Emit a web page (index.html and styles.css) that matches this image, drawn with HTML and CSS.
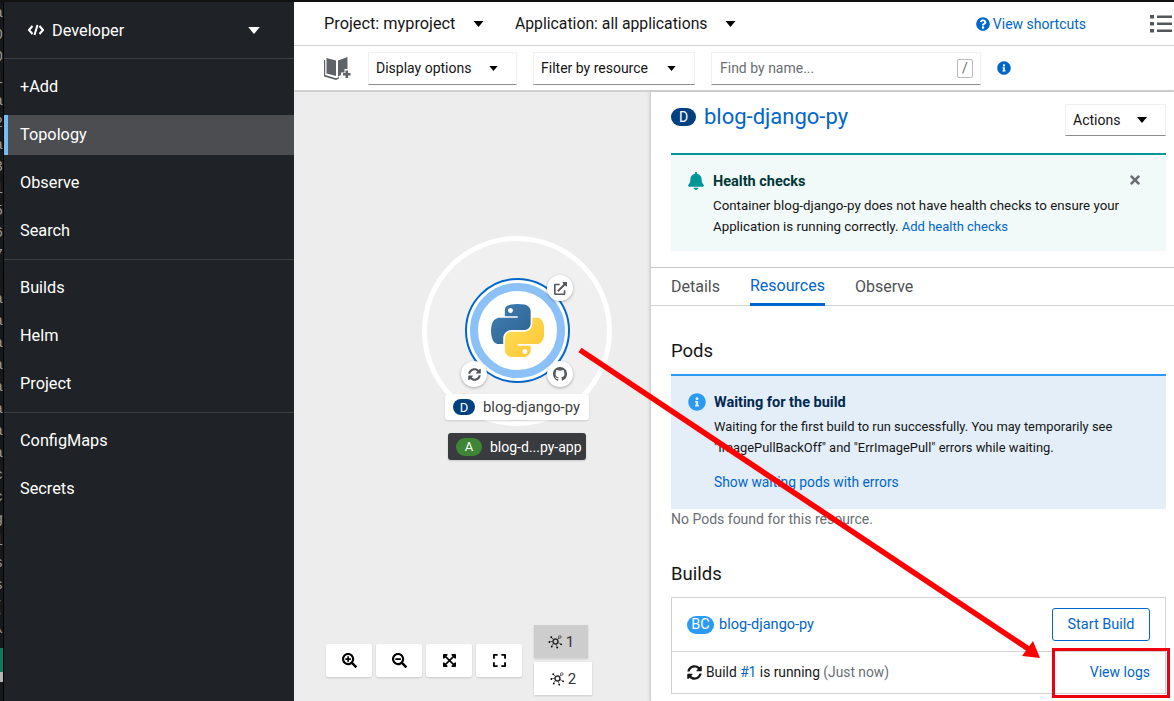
FILE: index.html
```html
<!DOCTYPE html>
<html lang="en">
<head>
    <meta charset="UTF-8">
    <meta name="viewport" content="width=device-width, initial-scale=1.0">
    <title>Topology</title>
    <link rel="stylesheet" href="styles.css">
</head>
<body>
    <svg width="0" height="0" class="defs">
        <defs>
            <symbol id="caret" viewBox="0 0 10 6"><path d="M0 0h10L5 6z"/></symbol>
            <symbol id="sync" viewBox="0 0 512 512"><path d="M370.72 133.28C339.458 104.008 298.888 87.962 255.848 88c-77.458.068-144.328 53.178-162.791 126.85-1.344 5.363-6.122 9.15-11.651 9.15H24.103c-7.498 0-13.194-6.807-11.807-14.176C33.933 94.924 134.813 8 256 8c66.448 0 126.791 26.136 171.315 68.685L463.03 40.97C478.149 25.851 504 36.559 504 57.941V192c0 13.255-10.745 24-24 24H345.941c-21.382 0-32.09-25.851-16.971-40.971l41.75-41.749zM32 296h134.059c21.382 0 32.09 25.851 16.971 40.971l-41.75 41.75c31.262 29.273 71.835 45.319 114.876 45.28 77.418-.07 144.315-53.144 162.787-126.849 1.344-5.363 6.122-9.15 11.651-9.15h57.304c7.498 0 13.194 6.807 11.807 14.176C478.067 417.076 377.187 504 256 504c-66.448 0-126.791-26.136-171.315-68.685L48.97 471.03C33.851 486.149 8 475.441 8 454.059V320c0-13.255 10.745-24 24-24z"/></symbol>
            <symbol id="info" viewBox="0 0 512 512"><path d="M256 8C119.043 8 8 119.083 8 256c0 136.997 111.043 248 248 248s248-111.003 248-248C504 119.083 392.957 8 256 8zm0 110c23.196 0 42 18.804 42 42s-18.804 42-42 42-42-18.804-42-42 18.804-42 42-42zm56 254c0 6.627-5.373 12-12 12h-88c-6.627 0-12-5.373-12-12v-24c0-6.627 5.373-12 12-12h12v-64h-12c-6.627 0-12-5.373-12-12v-24c0-6.627 5.373-12 12-12h64c6.627 0 12 5.373 12 12v100h12c6.627 0 12 5.373 12 12v24z"/></symbol>
            <symbol id="cluster" viewBox="0 0 16 16">
                <circle cx="8" cy="8" r="2.6" fill="none" stroke="currentColor" stroke-width="1.6"/>
                <path d="M6.2 6.2L3.5 3.5M9.8 6.2l2-2M6 9.7l-2 3M8.6 10.5l1 3M5.4 8H2.5M10.5 9l3 1.5" stroke="currentColor" stroke-width=".8" fill="none"/>
                <circle cx="3.5" cy="3.5" r="1"/><circle cx="12.6" cy="3.2" r="1.4" fill="none" stroke="currentColor" stroke-width=".8"/><circle cx="1.5" cy="8.5" r="1"/><circle cx="4" cy="13.4" r="1"/><circle cx="9.8" cy="14.5" r="1"/><circle cx="14" cy="11" r="1"/>
            </symbol>
        </defs>
    </svg>

    <div class="app">
        <div class="gutter">
            <span>a</span><span>0</span><span>0</span><span>l</span><span>a</span><span>2</span><span>a</span><span>3</span><span>1</span><span>5</span><span>6</span><span>7</span><span>:</span><span>a</span><span>a</span><span>a</span><span>a</span><span>a</span><span>a</span><span>a</span><span>a</span><span>c</span><span>c</span><span>g</span><span>1</span><span>s</span><span>s</span><span>(</span><span>\</span><span>|</span>
            <div class="gutter-green"></div>
            <div class="gutter-grey"></div>
        </div>

        <aside class="sidebar">
            <div class="perspective">
                <svg class="code-icon" viewBox="0 0 16 12" width="16" height="12"><path d="M4.5 2L1 6l3.5 4M11.5 2L15 6l-3.5 4M9.5 1L6.5 11" fill="none" stroke="#fff" stroke-width="2"/></svg>
                <span class="perspective-name">Developer</span>
                <svg class="caret" width="12" height="7" fill="#fff"><use href="#caret"/></svg>
            </div>
            <nav class="nav-group">
                <a href="#">+Add</a>
                <a href="#" class="active">Topology</a>
                <a href="#">Observe</a>
                <a href="#">Search</a>
            </nav>
            <nav class="nav-group">
                <a href="#">Builds</a>
                <a href="#">Helm</a>
                <a href="#">Project</a>
            </nav>
            <nav class="nav-group last">
                <a href="#">ConfigMaps</a>
                <a href="#">Secrets</a>
            </nav>
        </aside>

        <main class="main">
            <header class="topbar">
                <div class="scope project">Project: myproject <svg width="11" height="6"><use href="#caret"/></svg></div>
                <div class="scope application">Application: all applications <svg width="11" height="6"><use href="#caret"/></svg></div>
                <a href="#" class="shortcuts">
                    <svg width="14" height="14" viewBox="0 0 512 512" fill="#06c"><path d="M504 256c0 136.997-111.043 248-248 248S8 392.997 8 256C8 119.083 119.043 8 256 8s248 111.083 248 248zM262.655 90c-54.497 0-89.255 22.957-116.549 63.758-3.536 5.286-2.353 12.415 2.715 16.258l34.699 26.31c5.205 3.947 12.621 3.008 16.665-2.122 17.864-22.658 30.113-35.797 57.303-35.797 20.429 0 45.698 13.148 45.698 32.958 0 14.976-12.363 22.667-32.534 33.976C247.128 238.528 216 254.941 216 296v4c0 6.627 5.373 12 12 12h56c6.627 0 12-5.373 12-12v-1.333c0-28.462 83.186-29.647 83.186-106.667 0-58.002-60.165-102-116.531-102zM256 338c-25.365 0-46 20.635-46 46 0 25.364 20.635 46 46 46s46-20.636 46-46c0-25.365-20.635-46-46-46z"/></svg>
                    View shortcuts
                </a>
                <svg class="list-icon" width="22" height="18" viewBox="0 0 22 18" fill="#53575b">
                    <rect x="0" y="0" width="4" height="3.5"/><rect x="7" y="0.5" width="15" height="2.5"/>
                    <rect x="0" y="7" width="4" height="3.5"/><rect x="7" y="7.5" width="15" height="2.5"/>
                    <rect x="0" y="14" width="4" height="3.5"/><rect x="7" y="14.5" width="15" height="2.5"/>
                </svg>
            </header>

            <div class="toolbar">
                <svg class="book-icon" width="28" height="25" viewBox="0 0 28 25" fill="#5f6368">
                    <path d="M2.5 2l9.5 2.5V20L2.5 17.5zM14 4.5L23.5 1v12h-3v3.5H17V19l-3 1.5z"/>
                    <path d="M0 4h1.2v15l10.8 3.2 3-1.200v1.500L12 24 0 20.500z"/>
                    <path d="M21.5 14.5H24V17h2.500v2.500H24V22h-2.500v-2.500H19V17h2.500z"/>
                </svg>
                <div class="select display">Display options <svg width="9" height="5"><use href="#caret"/></svg></div>
                <div class="select filter">Filter by resource <svg width="9" height="5"><use href="#caret"/></svg></div>
                <div class="search-box">
                    <span>Find by name...</span>
                    <kbd>/</kbd>
                </div>
                <svg class="toolbar-info" width="14" height="14" fill="#06c"><use href="#info"/></svg>
            </div>

            <div class="content">
                <section class="canvas">
                    <div class="group-ring"></div>
                    <div class="node">
                        <svg class="python" width="53" height="53" viewBox="0 0 110 110">
                            <defs>
                                <linearGradient id="pyblue" x1="0" y1="0" x2="1" y2="1"><stop offset="0" stop-color="#3f7fb3"/><stop offset="1" stop-color="#2f6290"/></linearGradient>
                                <linearGradient id="pyyellow" x1="0" y1="0" x2="1" y2="1"><stop offset="0" stop-color="#ffe05a"/><stop offset="1" stop-color="#ffc331"/></linearGradient>
                            </defs>
                            <path fill="url(#pyblue)" d="M54.919 0.001c-4.584.022-8.961.413-12.812 1.095C30.761 3.1 28.701 7.3 28.701 15.032v10.21h26.813v3.404H18.638c-7.793 0-14.616 4.684-16.75 13.594-2.462 10.213-2.571 16.586 0 27.25 1.906 7.938 6.458 13.594 14.25 13.594h9.22V70.85c0-8.85 7.657-16.656 16.75-16.656h26.78c7.454 0 13.406-6.138 13.406-13.625V15.032c0-7.266-6.13-12.725-13.406-13.937C64.282.328 59.502-.02 54.918.001zM40.419 8.22c2.77 0 5.031 2.299 5.031 5.125 0 2.816-2.262 5.094-5.03 5.094-2.78 0-5.032-2.278-5.032-5.094 0-2.826 2.252-5.125 5.031-5.125z"/>
                            <path fill="url(#pyyellow)" d="M85.638 28.657v11.906c0 9.231-7.826 17-16.75 17h-26.78c-7.336 0-13.407 6.279-13.407 13.625v25.531c0 7.266 6.319 11.54 13.406 13.625 8.488 2.496 16.628 2.947 26.78 0 6.75-1.954 13.407-5.888 13.407-13.625V86.5H55.513v-3.405H95.7c7.793 0 10.696-5.436 13.406-13.594 2.8-8.399 2.68-16.476 0-27.25-1.925-7.758-5.604-13.594-13.406-13.594zM70.575 93.313c2.78 0 5.031 2.278 5.031 5.094 0 2.826-2.252 5.125-5.031 5.125-2.77 0-5.031-2.299-5.031-5.125 0-2.816 2.262-5.094 5.03-5.094z"/>
                        </svg>
                    </div>
                    <div class="decorator deco-link">
                        <svg width="13" height="13" viewBox="0 0 512 512" fill="#53575b"><path d="M432,320H400a16,16,0,0,0-16,16V448H64V128H208a16,16,0,0,0,16-16V80a16,16,0,0,0-16-16H48A48,48,0,0,0,0,112V464a48,48,0,0,0,48,48H400a48,48,0,0,0,48-48V336A16,16,0,0,0,432,320ZM488,0h-128c-21.37,0-32.05,25.91-17,41l35.73,35.73L135,320.37a24,24,0,0,0,0,34L157.67,377a24,24,0,0,0,34,0L435.28,133.32,471,169c15,15,41,4.5,41-17V24A24,24,0,0,0,488,0Z"/></svg>
                    </div>
                    <div class="decorator deco-sync">
                        <svg width="13" height="13" fill="#53575b"><use href="#sync"/></svg>
                    </div>
                    <div class="decorator deco-git">
                        <svg width="14" height="14" viewBox="0 0 16 16" fill="#53575b"><path d="M8 0C3.58 0 0 3.58 0 8c0 3.54 2.29 6.53 5.47 7.59.4.07.55-.17.55-.38 0-.19-.01-.82-.01-1.49-2.01.37-2.53-.49-2.69-.94-.09-.23-.48-.94-.82-1.13-.28-.15-.68-.52-.01-.53.63-.01 1.08.58 1.23.82.72 1.21 1.87.87 2.33.66.07-.52.28-.87.51-1.07-1.78-.2-3.64-.89-3.64-3.95 0-.87.31-1.59.82-2.15-.08-.2-.36-1.02.08-2.12 0 0 .67-.21 2.2.82.64-.18 1.32-.27 2-.27.68 0 1.36.09 2 .27 1.53-1.04 2.2-.82 2.2-.82.44 1.1.16 1.92.08 2.12.51.56.82 1.27.82 2.15 0 3.07-1.87 3.75-3.65 3.95.29.25.54.73.54 1.48 0 1.07-.01 1.93-.01 2.2 0 .21.15.46.55.38A8.013 8.013 0 0016 8c0-4.42-3.58-8-8-8z"/></svg>
                    </div>
                    <div class="chip chip-light"><span class="badge badge-d">D</span>blog-django-py</div>
                    <div class="chip chip-dark"><span class="badge badge-a">A</span>blog-d...py-app</div>

                    <div class="controls">
                        <button class="ctl">
                            <svg width="15" height="15" viewBox="0 0 512 512"><path d="M304 192v32c0 6.6-5.4 12-12 12h-56v56c0 6.6-5.4 12-12 12h-32c-6.6 0-12-5.4-12-12v-56h-56c-6.6 0-12-5.4-12-12v-32c0-6.6 5.4-12 12-12h56v-56c0-6.6 5.4-12 12-12h32c6.6 0 12 5.4 12 12v56h56c6.6 0 12 5.4 12 12zm201 284.7L476.7 505c-9.4 9.4-24.6 9.4-33.9 0L343 405.3c-4.5-4.5-7-10.6-7-17V372c-35.3 27.6-79.7 44-128 44C93.1 416 0 322.9 0 208S93.1 0 208 0s208 93.1 208 208c0 48.3-16.4 92.7-44 128h16.3c6.4 0 12.5 2.5 17 7l99.7 99.7c9.3 9.4 9.3 24.6 0 34zM344 208c0-75.2-60.8-136-136-136S72 132.8 72 208s60.8 136 136 136 136-60.8 136-136z"/></svg>
                        </button>
                        <button class="ctl">
                            <svg width="15" height="15" viewBox="0 0 512 512"><path d="M304 192v32c0 6.6-5.4 12-12 12H124c-6.6 0-12-5.4-12-12v-32c0-6.6 5.4-12 12-12h168c6.6 0 12 5.4 12 12zm201 284.7L476.7 505c-9.4 9.4-24.6 9.4-33.9 0L343 405.3c-4.5-4.5-7-10.6-7-17V372c-35.3 27.6-79.7 44-128 44C93.1 416 0 322.9 0 208S93.1 0 208 0s208 93.1 208 208c0 48.3-16.4 92.7-44 128h16.3c6.4 0 12.5 2.5 17 7l99.7 99.7c9.3 9.4 9.3 24.6 0 34zM344 208c0-75.2-60.8-136-136-136S72 132.8 72 208s60.8 136 136 136 136-60.8 136-136z"/></svg>
                        </button>
                        <button class="ctl">
                            <svg width="13" height="15" viewBox="0 0 448 512"><path d="M448 344v112a23.94 23.94 0 0 1-24 24H312c-21.39 0-32.09-25.9-17-41l36.2-36.2L224 295.6 116.77 402.9 153 439c15.09 15.1 4.39 41-17 41H24a23.94 23.94 0 0 1-24-24V344c0-21.4 25.89-32.1 41-17l36.19 36.2L184.46 256 77.18 148.7 41 185c-15.1 15.1-41 4.4-41-17V56a23.94 23.94 0 0 1 24-24h112c21.39 0 32.09 25.9 17 41l-36.2 36.2L224 216.4l107.23-107.3L295 73c-15.09-15.1-4.39-41 17-41h112a23.94 23.94 0 0 1 24 24v112c0 21.4-25.89 32.1-41 17l-36.19-36.2L263.54 256l107.28 107.3L407 327.1c15.1-15.2 41-4.5 41 16.9z"/></svg>
                        </button>
                        <button class="ctl">
                            <svg width="13" height="15" viewBox="0 0 448 512"><path d="M0 180V56c0-13.3 10.7-24 24-24h124c6.6 0 12 5.4 12 12v40c0 6.6-5.4 12-12 12H64v84c0 6.6-5.4 12-12 12H12c-6.6 0-12-5.4-12-12zM288 44v40c0 6.6 5.4 12 12 12h84v84c0 6.6 5.4 12 12 12h40c6.6 0 12-5.4 12-12V56c0-13.3-10.7-24-24-24H300c-6.6 0-12 5.4-12 12zm148 276h-40c-6.6 0-12 5.4-12 12v84h-84c-6.6 0-12 5.4-12 12v40c0 6.6 5.4 12 12 12h124c13.3 0 24-10.7 24-24V332c0-6.6-5.4-12-12-12zM160 468v-40c0-6.6-5.4-12-12-12H64v-84c0-6.6-5.4-12-12-12H12c-6.6 0-12 5.4-12 12v124c0 13.3 10.7 24 24 24h124c6.6 0 12-5.4 12-12z"/></svg>
                        </button>
                        <div class="layouts">
                            <button class="layout on"><svg width="15" height="15"><use href="#cluster"/></svg>1</button>
                            <button class="layout"><svg width="15" height="15"><use href="#cluster"/></svg>2</button>
                        </div>
                    </div>
                </section>

                <section class="panel">
                    <div class="panel-head">
                        <h1><span class="badge badge-d big">D</span>blog-django-py</h1>
                        <div class="select actions">Actions <svg width="10" height="6"><use href="#caret"/></svg></div>
                    </div>

                    <div class="alert alert-teal">
                        <svg class="alert-icon" width="16" height="18" viewBox="0 0 448 512" fill="#009596"><path d="M224 512c35.32 0 63.97-28.65 63.97-64H160.03c0 35.35 28.65 64 63.97 64zm215.39-149.71c-19.32-20.76-55.47-51.99-55.47-154.29 0-77.7-54.48-139.9-127.94-155.16V32c0-17.67-14.32-32-31.98-32s-31.98 14.33-31.98 32v20.84C118.56 68.1 64.08 130.3 64.08 208c0 102.3-36.15 133.53-55.47 154.29-6 6.45-8.66 14.16-8.61 21.71.11 16.4 12.98 32 32.1 32h383.8c19.12 0 32-15.6 32.1-32 .05-7.55-2.61-15.27-8.61-21.71z"/></svg>
                        <div class="alert-body">
                            <h4 class="title-teal">Health checks</h4>
                            <p>Container blog-django-py does not have health checks to ensure your Application is running correctly. <a href="#">Add health checks</a></p>
                        </div>
                        <svg class="alert-close" width="10" height="14" viewBox="0 0 352 512" fill="#6a6e73"><path d="M242.72 256l100.07-100.07c12.28-12.28 12.28-32.19 0-44.48l-22.24-22.24c-12.28-12.28-32.19-12.28-44.48 0L176 189.28 75.93 89.21c-12.28-12.28-32.19-12.28-44.48 0L9.21 111.45c-12.28 12.28-12.28 32.19 0 44.48L109.28 256 9.21 356.07c-12.28 12.28-12.28 32.19 0 44.48l22.24 22.24c12.28 12.28 32.2 12.28 44.48 0L176 322.72l100.07 100.07c12.28 12.28 32.2 12.28 44.48 0l22.24-22.24c12.28-12.28 12.28-32.19 0-44.48L242.72 256z"/></svg>
                    </div>

                    <div class="tabs">
                        <a href="#">Details</a>
                        <a href="#" class="current">Resources</a>
                        <a href="#">Observe</a>
                    </div>

                    <h2 class="section-title pods-title">Pods</h2>
                    <div class="alert alert-blue">
                        <svg class="alert-icon" width="18" height="18" fill="#2b9af3"><use href="#info"/></svg>
                        <div class="alert-body">
                            <h4 class="title-blue">Waiting for the build</h4>
                            <p>Waiting for the first build to run successfully. You may temporarily see "ImagePullBackOff" and "ErrImagePull" errors while waiting.</p>
                            <a href="#" class="alert-link">Show waiting pods with errors</a>
                        </div>
                    </div>
                    <p class="muted">No Pods found for this resource.</p>

                    <h2 class="section-title builds-title">Builds</h2>
                    <div class="build-list">
                        <div class="build-row first">
                            <a href="#" class="build-name"><span class="badge badge-bc">BC</span>blog-django-py</a>
                            <button class="btn-outline">Start Build</button>
                        </div>
                        <div class="build-row second">
                            <span class="build-status">
                                <svg width="15" height="15" fill="#151515"><use href="#sync"/></svg>
                                <span>Build <a href="#">#1</a> is running <span class="build-time">(Just now)</span></span>
                            </span>
                            <a href="#" class="view-logs">View logs</a>
                        </div>
                    </div>
                </section>
            </div>
        </main>
    </div>

    <!-- annotation drawn over the screenshot -->
    <svg class="annotation" width="1174" height="701" viewBox="0 0 1174 701">
        <path d="M580 350L1030 650" stroke="#f00" stroke-width="5.5" fill="none"/>
        <path d="M1040 658L1022 656L1033 641z" fill="#f00"/>
    </svg>
    <div class="annotation-box"></div>
</body>
</html>
```

FILE: styles.css
```css
* {
    box-sizing: border-box;
}

html, body {
    height: 100%;
    margin: 0;
    overflow: hidden;
}

body {
    background-color: #fff;
    color: #151515;
    font-family: Roboto, sans-serif;
    font-size: 14px;
}

a {
    color: #06c;
    text-decoration: none;
}

button {
    font-family: inherit;
}

.defs {
    position: absolute;
}

.app {
    display: flex;
    height: 100%;
    border-top: 2px solid #111;
}

/* bit of another window showing at the left edge */
.gutter {
    width: 4px;
    flex: none;
    background-color: #16191c;
    color: #9c9c9c;
    font-family: "Liberation Mono", monospace;
    font-size: 14px;
    line-height: 22px;
    display: flex;
    flex-direction: column;
    overflow: hidden;
    border-right: 1px solid #000;
}

.gutter span {
    height: 22px;
    flex: none;
    display: flex;
    justify-content: flex-end;
}

.gutter-green {
    height: 24px;
    flex: none;
    background-color: #0f7b5c;
    margin-top: -14px;
}

.gutter-grey {
    height: 10px;
    flex: none;
    background-color: #b5b5b5;
}

.sidebar {
    width: 290px;
    flex: none;
    background-color: #1f2327;
    color: #fff;
    font-size: 16.3px;
}

.perspective {
    height: 57px;
    display: flex;
    align-items: center;
    padding: 0 34px 0 24px;
    border-bottom: 1px solid #3c3f42;
}

.perspective-name {
    margin-left: 8px;
    flex: 1;
}

.nav-group {
    display: flex;
    flex-direction: column;
    gap: 8px;
    padding: 8px 0;
    border-bottom: 1px solid #3c3f42;
}

.nav-group.last {
    border-bottom: 0;
}

.nav-group a {
    height: 40px;
    display: flex;
    align-items: center;
    padding: 0 0 2px 16px;
    color: #fff;
}

.nav-group a.active {
    background-color: #4b4d50;
    border-left: 4px solid #73bcf7;
    padding-left: 12px;
}

.main {
    flex: 1;
    min-width: 0;
    display: flex;
    flex-direction: column;
}

.topbar {
    height: 44px;
    flex: none;
    display: flex;
    align-items: center;
    padding: 0 2px 0 30px;
    border-bottom: 1px solid #d2d2d2;
    font-size: 16.3px;
}

.scope {
    display: flex;
    align-items: center;
    gap: 18px;
}

.project {
    width: 191px;
}

.application {
    flex: 1;
    font-size: 15.75px;
}

.shortcuts {
    display: flex;
    align-items: center;
    gap: 3px;
    font-size: 14px;
    margin-right: 64px;
}

.toolbar {
    height: 46px;
    flex: none;
    display: flex;
    align-items: center;
    padding-left: 30px;
    border-bottom: 2px solid #d2d2d2;
}

.book-icon {
    margin-right: 16px;
}

.select {
    height: 33px;
    display: flex;
    align-items: center;
    justify-content: space-between;
    padding: 0 7px;
    border: 1px solid #f0f0f0;
    border-bottom-color: #8a8d90;
    font-size: 14px;
}

.display {
    width: 149px;
    padding-right: 18px;
    margin-right: 16px;
}

.filter {
    width: 162px;
    padding-right: 18px;
    margin-right: 16px;
}

.search-box {
    width: 270px;
    height: 33px;
    display: flex;
    align-items: center;
    justify-content: space-between;
    padding: 0 7px 0 8px;
    color: #6a6e73;
    border: 1px solid #f0f0f0;
    border-bottom-color: #8a8d90;
}

kbd {
    width: 16px;
    height: 19px;
    display: flex;
    align-items: center;
    justify-content: center;
    border: 1px solid #b8bbbe;
    border-radius: 2px;
    font-family: inherit;
    font-size: 14px;
}

.toolbar-info {
    margin-left: 16px;
}

.content {
    flex: 1;
    min-height: 0;
    display: flex;
}

.canvas {
    width: 356px;
    flex: none;
    position: relative;
    background-color: #ededed;
    display: flex;
    align-items: flex-end;
}

.group-ring {
    position: absolute;
    left: 128px;
    top: 144px;
    width: 190px;
    height: 190px;
    border: 5px solid #fff;
    border-radius: 50%;
    background-color: #f0f0f0;
}

.node {
    position: absolute;
    left: 171px;
    top: 186px;
    width: 105px;
    height: 105px;
    border: 2px solid #06c;
    border-radius: 50%;
    background-color: #fff;
    display: flex;
    align-items: center;
    justify-content: center;
}

.node::before {
    content: "";
    position: absolute;
    inset: 3px;
    border: 8px solid #8bc1f7;
    border-radius: 50%;
}

.decorator {
    position: absolute;
    width: 26px;
    height: 26px;
    border-radius: 50%;
    background-color: #fff;
    box-shadow: 0 1px 3px rgba(0, 0, 0, 0.3);
    display: flex;
    align-items: center;
    justify-content: center;
}

.deco-link {
    left: 253px;
    top: 183px;
}

.deco-sync {
    left: 167px;
    top: 269px;
}

.deco-git {
    left: 253px;
    top: 269px;
}

.chip {
    position: absolute;
    display: flex;
    align-items: center;
    height: 26px;
    border-radius: 3px;
    font-size: 14.8px;
    box-shadow: 0 1px 2px rgba(0, 0, 0, 0.15);
}

.chip-light {
    left: 151px;
    top: 302px;
    width: 144px;
    padding-left: 8px;
    background-color: #fff;
    color: #3c3f42;
}

.chip-dark {
    left: 154px;
    top: 341px;
    width: 138px;
    height: 27px;
    padding-left: 8px;
    background-color: #393b3e;
    color: #fff;
    font-size: 14px;
}

.badge {
    display: inline-flex;
    align-items: center;
    justify-content: center;
    min-width: 22px;
    height: 16px;
    border-radius: 10px;
    color: #fff;
    font-size: 13px;
    margin-right: 8px;
}

.badge-d {
    background-color: #004080;
}

.badge-a {
    background-color: #3e8635;
    min-width: 26px;
    height: 18px;
}

.badge-bc {
    background-color: #2b9af3;
    height: 18px;
    min-width: 27px;
    margin-right: 5px;
    font-size: 14.5px;
}

.controls {
    width: 100%;
    display: flex;
    align-items: flex-end;
    padding: 0 0 6px 32px;
    position: relative;
}

.ctl {
    width: 46px;
    height: 33px;
    margin: 0 4px 18px 0;
    padding: 0;
    border: 0;
    border-radius: 2px;
    background-color: #fff;
    box-shadow: 0 1px 2px rgba(0, 0, 0, 0.15);
    display: flex;
    align-items: center;
    justify-content: center;
}

.layouts {
    display: flex;
    flex-direction: column;
    gap: 4px;
    margin-left: 8px;
}

.layout {
    width: 58px;
    height: 33px;
    padding: 0;
    border: 0;
    background-color: #fff;
    box-shadow: 0 1px 2px rgba(0, 0, 0, 0.15);
    display: flex;
    align-items: center;
    justify-content: center;
    gap: 3px;
    font-size: 15px;
    color: #333;
}

.layout.on {
    width: 54px;
    background-color: #cdcdcd;
}

.panel {
    flex: 1;
    min-width: 0;
    background-color: #fff;
    border-left: 1px solid #d2d2d2;
    box-shadow: -1px 0 3px rgba(0, 0, 0, 0.1);
    position: relative;
}

.panel-head {
    height: 61px;
    display: flex;
    align-items: flex-start;
    justify-content: space-between;
    padding: 12px 8px 0 20px;
}

.panel-head h1 {
    margin: 1px 0 0;
    font-size: 22px;
    font-weight: 400;
    color: #06c;
    display: flex;
    align-items: center;
    line-height: 24px;
}

.badge.big {
    min-width: 25px;
    height: 18px;
    font-size: 14px;
    margin-right: 8px;
}

.actions {
    width: 101px;
    height: 32px;
    padding-right: 18px;
}

.alert {
    margin: 0 8px 0 20px;
    display: flex;
    padding: 17px 26px 0 18px;
}

.alert-teal {
    height: 98px;
    background-color: #f2f9f9;
    border-top: 2px solid #009596;
}

.alert-blue {
    height: 135px;
    background-color: #e3eef8;
    border-top: 2px solid #2b9af3;
}

.alert-icon {
    flex: none;
    margin-right: 8px;
}

.alert-teal .alert-icon {
    margin-left: -1px;
    margin-right: 9px;
}

.alert-blue .alert-icon {
    margin-left: -1px;
}

.alert-body {
    flex: 1;
    font-size: 13.3px;
}

.alert-blue .alert-body {
    font-size: 12.9px;
}

.alert-body p {
    margin: 0;
    line-height: 21px;
}

.alert-body p a {
    font-size: 13px;
}

.alert h4 {
    margin: 0 0 3px;
    font-size: 14.5px;
    font-weight: 700;
    line-height: 20px;
}

.title-teal {
    color: #003737;
}

.title-blue {
    color: #002952;
}

.alert-close {
    margin-top: 1px;
    margin-left: 8px;
}

.alert-link {
    display: block;
    margin-top: 16px;
    font-size: 13.8px;
}

.tabs {
    height: 39px;
    margin-top: 16px;
    display: flex;
    gap: 30px;
    padding-left: 20px;
    border-top: 1px solid #c8c8c8;
    border-bottom: 1px solid #d2d2d2;
    font-size: 16px;
}

.tabs a {
    display: flex;
    align-items: center;
    color: #4f5255;
}

.tabs a.current {
    color: #06c;
    border-bottom: 3px solid #06c;
    margin-bottom: -1px;
}

.section-title {
    margin: 0;
    padding-left: 20px;
    font-size: 18.5px;
    font-weight: 400;
    color: #151515;
    line-height: 24px;
}

.pods-title {
    margin-top: 33px;
    margin-bottom: 11px;
}

.builds-title {
    margin-top: 33px;
    margin-bottom: 11px;
}

.muted {
    margin: 0 0 0 20px;
    color: #6a6e73;
    font-size: 14px;
    line-height: 20px;
}

.build-list {
    margin: 0 8px 0 20px;
    border: 1px solid #d2d2d2;
}

.build-row {
    display: flex;
    align-items: center;
    justify-content: space-between;
    padding: 0 15px;
}

.build-row.first {
    height: 54px;
    border-bottom: 1px solid #d2d2d2;
}

.build-row.second {
    height: 41px;
    padding-bottom: 1px;
}

.build-name {
    display: flex;
    align-items: center;
    font-size: 14.5px;
}

.build-status {
    display: flex;
    align-items: center;
    gap: 4px;
    font-size: 13.8px;
}

.build-time {
    color: #6a6e73;
}

.btn-outline {
    width: 98px;
    height: 33px;
    background: #fff;
    border: 1px solid #06c;
    border-radius: 3px;
    color: #06c;
    font-size: 14.5px;
    padding: 0;
}

.view-logs {
    font-size: 14px;
}

/* red marks someone drew on top */
.annotation {
    position: absolute;
    left: 0;
    top: 0;
    pointer-events: none;
}

.annotation-box {
    position: absolute;
    left: 1052px;
    top: 648px;
    width: 118px;
    height: 50px;
    border: 3px solid #ee0010;
}
```
